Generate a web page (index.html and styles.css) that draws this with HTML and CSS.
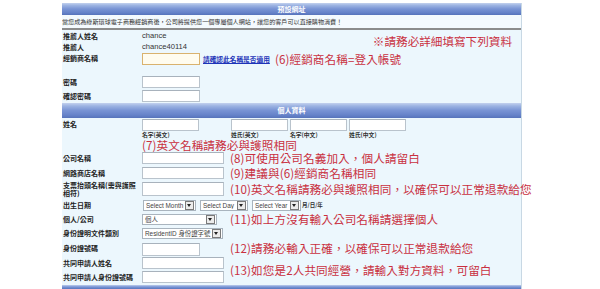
FILE: index.html
```html
<!DOCTYPE html>
<html lang="zh-Hant">
<head>
<meta charset="UTF-8">
<title>經銷商申請</title>
<link rel="stylesheet" href="styles.css">
</head>
<body>
<div class="panel">
  <div class="bar bar-first">預設網址</div>
  <p class="notice">當您成為綠斯環球電子商務經銷商後，公司將提供您一個專屬個人網站，讓您的客戶可以直接購物消費！</p>
  <div class="rule"></div>

  <div class="form form-top">
    <div class="lbl">推薦人姓名</div>
    <div class="val">chance</div>
    <div class="must">※請務必詳細填寫下列資料</div>

    <div class="lbl">推薦人</div>
    <div class="val">chance40114</div>

    <div class="lbl lbl-top">經銷商名稱</div>
    <div class="cell span2 cell-top">
      <input class="box box-short box-focus" type="text">
      <a class="check" href="#">請確認此名稱是否適用</a>
      <span class="note note-6">(6)經銷商名稱=登入帳號</span>
    </div>

    <div class="lbl">密碼</div>
    <div class="cell"><input class="box box-short" type="password"></div>

    <div class="lbl">確認密碼</div>
    <div class="cell"><input class="box box-short" type="password"></div>
  </div>

  <div class="bar">個人資料</div>

  <div class="form form-main">
    <div class="lbl lbl-top">姓名</div>
    <div class="cell span2 names-cell">
      <div class="names">
        <div class="nm nm-first"><input class="box box-name" type="text"><span class="cap">名字(英文)</span></div>
        <div class="nm"><input class="box box-name" type="text"><span class="cap">姓氏(英文)</span></div>
        <div class="nm"><input class="box box-name" type="text"><span class="cap">名字(中文)</span></div>
        <div class="nm"><input class="box box-name" type="text"><span class="cap">姓氏(中文)</span></div>
      </div>
      <span class="note note-name">(7)英文名稱請務必與護照相同</span>
    </div>

    <div class="lbl">公司名稱</div>
    <div class="cell"><input class="box box-long" type="text"></div>
    <div class="note">(8)可使用公司名義加入，個人請留白</div>

    <div class="lbl">網路商店名稱</div>
    <div class="cell"><input class="box box-long" type="text"></div>
    <div class="note">(9)建議與(6)經銷商名稱相同</div>

    <div class="lbl">支票抬頭名稱(需與護照相符)</div>
    <div class="cell"><input class="box box-long box-tall" type="text"></div>
    <div class="note">(10)英文名稱請務必與護照相同，以確保可以正常退款給您</div>

    <div class="lbl">出生日期</div>
    <div class="cell span2">
      <div class="sel sel-month"><span class="sel-text">Select Month</span><span class="sel-btn"></span></div>
      <div class="sel sel-day"><span class="sel-text">Select Day</span><span class="sel-btn"></span></div>
      <div class="sel sel-year"><span class="sel-text">Select Year</span><span class="sel-btn"></span></div>
      <span class="mdy">月/日/年</span>
    </div>

    <div class="lbl">個人/公司</div>
    <div class="cell">
      <div class="sel sel-kind"><span class="sel-text">個人</span><span class="sel-btn"></span></div>
    </div>
    <div class="note">(11)如上方沒有輸入公司名稱請選擇個人</div>

    <div class="lbl">身份證明文件類別</div>
    <div class="cell span2">
      <div class="sel sel-doc"><span class="sel-text">ResidentID 身份證字號</span><span class="sel-btn"></span></div>
    </div>

    <div class="lbl">身份證號碼</div>
    <div class="cell"><input class="box box-short box-id" type="text"></div>
    <div class="note">(12)請務必輸入正確，以確保可以正常退款給您</div>

    <div class="lbl">共同申請人姓名</div>
    <div class="cell"><input class="box box-long" type="text"></div>
    <div class="note note-2rows">(13)如您是2人共同經營，請輸入對方資料，可留白</div>

    <div class="lbl">共同申請人身份證號碼</div>
    <div class="cell"><input class="box box-long" type="text"></div>
  </div>

  <div class="bar bar-last"></div>
</div>
</body>
</html>
```

FILE: styles.css
```css
body {
  margin: 0;
  background: #fff;
  font-family: "Noto Sans CJK TC", "Liberation Sans", sans-serif;
  color: #222;
}
.panel {
  width: 460px;
  margin: 3px 0 0 62px;
  background: #ecf7fd;
  border-right: 1px solid #c8d8e4;
  box-sizing: border-box;
}

/* blue section bars */
.bar {
  height: 15px;
  line-height: 15px;
  text-align: center;
  color: #fff;
  font-size: 7px;
  font-weight: bold;
  background: linear-gradient(#c3d1ee 0, #9cb3e2 20%, #7893d4 50%, #6683c9 80%, #5673bb 100%);
}
.bar-first {
  height: 12px;
  line-height: 12px;
}
.bar-last {
  height: 4px;
}
.notice {
  margin: 0;
  height: 13px;
  line-height: 13px;
  font-size: 6.1px;
  color: #333;
  white-space: nowrap;
  overflow: hidden;
  background: #f4fafe;
}
.rule {
  height: 2px;
  background: #8c8c8c;
}

/* form grids */
.form {
  display: grid;
  grid-template-columns: 80px 88px 1fr;
  align-items: center;
}
.form-top {
  grid-template-rows: 11px 11px 23px 14px 13px;
  margin-bottom: 1px;
}
.form-main {
  grid-template-rows: 33px 14px 15px 18px 14px 14px 14px 16px 14px 14px;
  margin-bottom: 1px;
}
.lbl {
  grid-column: 1;
  padding-left: 1px;
  font-size: 7px;
  font-weight: bold;
  line-height: 8px;
  color: #1e1e1e;
}
.lbl-top {
  align-self: start;
  padding-top: 2px;
}
.val {
  grid-column: 2;
  font-family: "Liberation Sans", sans-serif;
  font-size: 7.6px;
  color: #333;
}
.cell {
  grid-column: 2;
  display: flex;
  align-items: center;
}
.span2 {
  grid-column: 2 / 4;
}
.cell-top {
  align-self: start;
  padding-top: 1px;
}

/* red hints */
.note {
  grid-column: 3;
  font-size: 11.6px;
  line-height: 12px;
  color: #c9303f;
  white-space: nowrap;
  letter-spacing: 0.1px;
}
.note-6 {
  margin-left: 5px;
}
.note-name {
  line-height: 12px;
  margin-top: 1px;
}
.note-2rows {
  grid-row: span 2;
}
.must {
  grid-column: 3;
  grid-row: 1 / 3;
  text-align: right;
  padding-right: 9px;
  font-size: 11.6px;
  line-height: 12px;
  color: #c9303f;
  white-space: nowrap;
}
.check {
  margin-left: 3px;
  font-size: 6.7px;
  font-weight: bold;
  color: #1d33b8;
  text-decoration: underline;
}

/* inputs */
.box {
  box-sizing: border-box;
  height: 12px;
  margin: 0;
  padding: 0;
  border: 1px solid #b9c3cc;
  border-top-color: #a8b2bc;
  background: #fff;
}
.box-short { width: 58px; }
.box-long { width: 82px; }
.box-name { width: 57px; }
.box-tall { height: 14px; }
.box-id { height: 13px; margin-top: 3px; }
.box-focus {
  border-color: #d9b26e;
  background: #fffcef;
}

/* name row */
.names-cell {
  flex-direction: column;
  align-items: flex-start;
  align-self: start;
  padding-top: 1px;
}
.names {
  display: flex;
}
.nm {
  display: flex;
  flex-direction: column;
  width: 59px;
}
.nm-first {
  width: 89px;
}
.cap {
  margin-top: 1px;
  font-size: 5.8px;
  line-height: 6px;
  font-weight: bold;
  color: #333;
}

/* fake selects */
.sel {
  box-sizing: border-box;
  display: flex;
  align-items: center;
  height: 11px;
  border: 1px solid #a9b4be;
  background: #fff;
  padding: 0 1px 0 2px;
  margin-right: 4px;
}
.sel-text {
  flex: 1;
  font-family: "Liberation Sans", "Noto Sans CJK TC", sans-serif;
  font-size: 6.4px;
  color: #444;
  white-space: nowrap;
  overflow: hidden;
}
.sel-btn {
  position: relative;
  flex: none;
  width: 7px;
  height: 7px;
  border: 1px solid #7a7a7a;
  background: #ececec;
}
.sel-btn::before {
  content: "";
  position: absolute;
  left: 1px;
  top: 2px;
  border-left: 2.5px solid transparent;
  border-right: 2.5px solid transparent;
  border-top: 3px solid #222;
}
.sel-month { width: 53px; margin-left: 1px; }
.sel-day { width: 48px; }
.sel-year { width: 49px; margin-right: 1px; }
.sel-kind { width: 75px; }
.sel-doc { width: 81px; }
.mdy {
  font-size: 5.5px;
  font-weight: bold;
  color: #333;
}
```
